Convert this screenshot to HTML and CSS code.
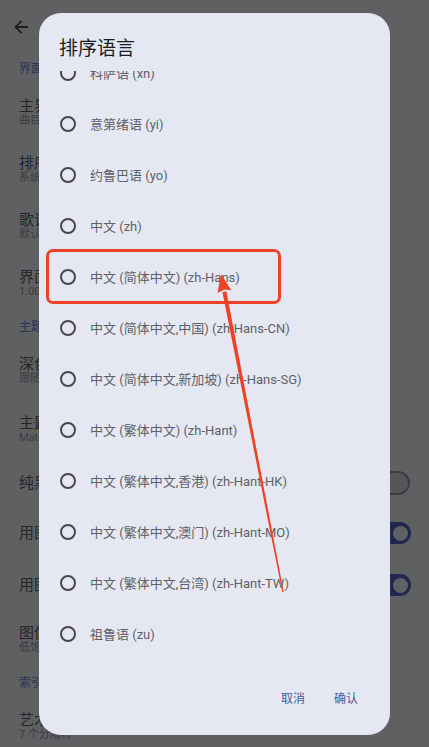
FILE: index.html
```html
<!DOCTYPE html>
<html lang="zh-CN">
<head>
<meta charset="utf-8">
<title>排序语言</title>
<link rel="stylesheet" href="styles.css">
</head>
<body>
<div class="page">
  <div class="appbar">
    <svg class="back" width="14" height="14" viewBox="0 0 14 14"><path d="M13 7H1.8M7 1.5L1.5 7 7 12.5" fill="none" stroke="#1d1e20" stroke-width="1.8" stroke-linecap="square"/></svg>
  </div>
  <div class="sec">界面</div>
  <div class="item"><div class="t">主界面标签页</div><div class="s">曲目、专辑、艺术家、文件夹</div></div>
  <div class="item"><div class="t">排序语言</div><div class="s">系统默认</div></div>
  <div class="item"><div class="t">歌词界面</div><div class="s">默认</div></div>
  <div class="item"><div class="t">界面缩放</div><div class="s">1.00x</div></div>
  <div class="sec">主题</div>
  <div class="item tall"><div class="t">深色模式</div><div class="s">跟随系统</div></div>
  <div class="item"><div class="t">主题色</div><div class="s">Material You</div></div>
  <div class="row first"><div class="t">纯黑背景</div><span class="switch off"></span></div>
  <div class="row"><div class="t">用图片颜色作为主题色</div><span class="switch on"></span></div>
  <div class="row"><div class="t">用图片作为播放背景</div><span class="switch on"></span></div>
  <div class="item"><div class="t">图像质量</div><div class="s">低饱和度</div></div>
  <div class="sec">索引</div>
  <div class="item"><div class="t">艺术家分隔符</div><div class="s">7 个分隔符</div></div>
</div>

<div class="dialog">
  <div class="dtitle">排序语言</div>
  <div class="list">
    <div class="inner">
      <div class="opt"><span class="radio"></span><span class="lbl">科萨语 (xh)</span></div>
      <div class="opt"><span class="radio"></span><span class="lbl">意第绪语 (yi)</span></div>
      <div class="opt"><span class="radio"></span><span class="lbl">约鲁巴语 (yo)</span></div>
      <div class="opt"><span class="radio"></span><span class="lbl">中文 (zh)</span></div>
      <div class="opt"><span class="radio"></span><span class="lbl">中文 (简体中文) (zh-Hans)</span></div>
      <div class="opt"><span class="radio"></span><span class="lbl">中文 (简体中文,中国) (zh-Hans-CN)</span></div>
      <div class="opt"><span class="radio"></span><span class="lbl">中文 (简体中文,新加坡) (zh-Hans-SG)</span></div>
      <div class="opt"><span class="radio"></span><span class="lbl">中文 (繁体中文) (zh-Hant)</span></div>
      <div class="opt"><span class="radio"></span><span class="lbl">中文 (繁体中文,香港) (zh-Hant-HK)</span></div>
      <div class="opt"><span class="radio"></span><span class="lbl">中文 (繁体中文,澳门) (zh-Hant-MO)</span></div>
      <div class="opt"><span class="radio"></span><span class="lbl">中文 (繁体中文,台湾) (zh-Hant-TW)</span></div>
      <div class="opt"><span class="radio"></span><span class="lbl">祖鲁语 (zu)</span></div>
    </div>
  </div>
  <div class="actions">
    <span class="btn">取消</span>
    <span class="btn">确认</span>
  </div>
</div>

<div class="mark"></div>
<svg class="arrow" width="429" height="747" viewBox="0 0 429 747">
  <polygon points="226.4,291.3 283.7,591.9 282.3,592.1 222.4,292.1" fill="#ee4226"/>
  <polygon points="221,274 231.3,290.3 224.4,289.5 217.5,293" fill="#ee4226"/>
</svg>
</body>
</html>
```

FILE: styles.css
```css
* { box-sizing: border-box; }
html, body {
  margin: 0;
  padding: 0;
}
body {
  width: 429px;
  height: 747px;
  overflow: hidden;
  position: relative;
  background: #5f6062;
  font-family: Roboto, "Noto Sans CJK SC", "Noto Sans", sans-serif;
}

/* background page (under scrim) */
.page {
  display: flex;
  flex-direction: column;
}
.appbar {
  height: 54px;
  display: flex;
  align-items: center;
  padding-left: 14px;
}
.back { display: block; }
.sec {
  height: 30px;
  line-height: 30px;
  padding-left: 19px;
  font-size: 12px;
  color: #2b3358;
}
.item {
  height: 57px;
  padding: 13px 19px 0;
}
.item.tall { height: 59px; }
.t {
  font-size: 15px;
  line-height: 18px;
  color: #242528;
  white-space: nowrap;
}
.s {
  font-size: 11px;
  line-height: 12px;
  color: #3b3c40;
  white-space: nowrap;
}
.row {
  height: 52px;
  display: flex;
  align-items: center;
  justify-content: space-between;
  padding: 0 18px 0 19px;
}
.row.first { height: 49px; }
.switch {
  display: block;
  width: 40px;
  position: relative;
  border-radius: 12px;
}
.switch.off {
  height: 24px;
  background: #55565a;
  border: 2px solid #3c3d40;
  margin-right: 1px;
}
.switch.on {
  height: 22px;
  background: #1f2750;
}
.switch.on::after {
  content: "";
  position: absolute;
  right: 3px;
  top: 3.5px;
  width: 15px;
  height: 15px;
  border-radius: 50%;
  background: #5f6062;
}

/* dialog */
.dialog {
  position: absolute;
  left: 39px;
  top: 13px;
  width: 351px;
  height: 722px;
  border-radius: 22px;
  background: #e5e8f2;
  display: flex;
  flex-direction: column;
  overflow: hidden;
}
.dtitle {
  padding: 24px 20px 10px;
  font-size: 19px;
  line-height: 24px;
  color: #1b1c21;
}
.list {
  height: 594px;
  overflow: hidden;
}
.inner {
  margin-top: -24px;
  display: flex;
  flex-direction: column;
}
.opt {
  height: 51px;
  display: flex;
  align-items: center;
  padding-left: 21px;
}
.radio {
  width: 16px;
  height: 16px;
  border: 2px solid #47484f;
  border-radius: 50%;
  flex: none;
}
.lbl {
  margin-left: 14px;
  font-size: 13px;
  color: #606167;
  white-space: nowrap;
}
.actions {
  flex: 1;
  display: flex;
  justify-content: flex-end;
  gap: 29px;
  padding: 24px 32px 0 0;
}
.btn {
  font-size: 12px;
  line-height: 20px;
  height: 20px;
  color: #4a5a94;
}

/* annotation overlays */
.mark {
  position: absolute;
  left: 46px;
  top: 249px;
  width: 235px;
  height: 55px;
  border: 3px solid #ec4227;
  border-radius: 7px;
}
.arrow {
  position: absolute;
  left: 0;
  top: 0;
}
```
